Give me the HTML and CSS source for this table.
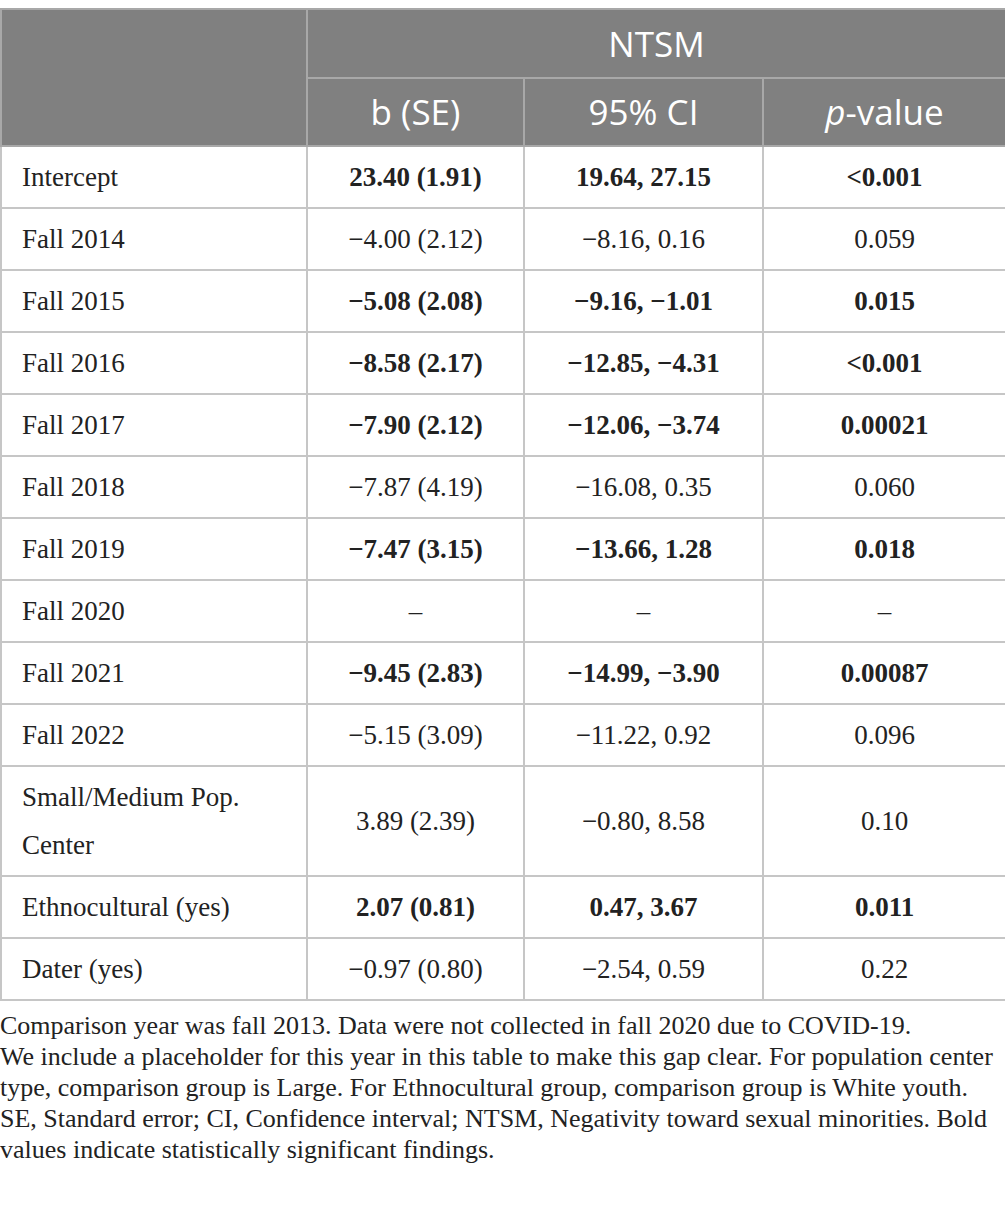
FILE: index.html
```html
<!DOCTYPE html>
<html>

<head lang="en">
	<meta charset="UTF-8">
	<title>NTSM table</title>
	<link rel="stylesheet" href="styles.css">
</head>

<body>
	<table class="data-table">
		<colgroup>
			<col class="col-label">
			<col class="col-b">
			<col class="col-ci">
			<col class="col-p">
		</colgroup>
		<thead>
			<tr class="head-top">
				<th rowspan="2"></th>
				<th colspan="3">NTSM</th>
			</tr>
			<tr class="head-sub">
				<th>b (SE)</th>
				<th>95% CI</th>
				<th><i>p</i>-value</th>
			</tr>
		</thead>
		<tbody>
			<tr class="sig">
				<td>Intercept</td>
				<td>23.40 (1.91)</td>
				<td>19.64, 27.15</td>
				<td>&lt;0.001</td>
			</tr>
			<tr>
				<td>Fall 2014</td>
				<td>−4.00 (2.12)</td>
				<td>−8.16, 0.16</td>
				<td>0.059</td>
			</tr>
			<tr class="sig">
				<td>Fall 2015</td>
				<td>−5.08 (2.08)</td>
				<td>−9.16, −1.01</td>
				<td>0.015</td>
			</tr>
			<tr class="sig">
				<td>Fall 2016</td>
				<td>−8.58 (2.17)</td>
				<td>−12.85, −4.31</td>
				<td>&lt;0.001</td>
			</tr>
			<tr class="sig">
				<td>Fall 2017</td>
				<td>−7.90 (2.12)</td>
				<td>−12.06, −3.74</td>
				<td>0.00021</td>
			</tr>
			<tr>
				<td>Fall 2018</td>
				<td>−7.87 (4.19)</td>
				<td>−16.08, 0.35</td>
				<td>0.060</td>
			</tr>
			<tr class="sig">
				<td>Fall 2019</td>
				<td>−7.47 (3.15)</td>
				<td>−13.66, 1.28</td>
				<td>0.018</td>
			</tr>
			<tr>
				<td>Fall 2020</td>
				<td>–</td>
				<td>–</td>
				<td>–</td>
			</tr>
			<tr class="sig">
				<td>Fall 2021</td>
				<td>−9.45 (2.83)</td>
				<td>−14.99, −3.90</td>
				<td>0.00087</td>
			</tr>
			<tr>
				<td>Fall 2022</td>
				<td>−5.15 (3.09)</td>
				<td>−11.22, 0.92</td>
				<td>0.096</td>
			</tr>
			<tr>
				<td>Small/Medium Pop.<br>Center</td>
				<td>3.89 (2.39)</td>
				<td>−0.80, 8.58</td>
				<td>0.10</td>
			</tr>
			<tr class="sig">
				<td>Ethnocultural (yes)</td>
				<td>2.07 (0.81)</td>
				<td>0.47, 3.67</td>
				<td>0.011</td>
			</tr>
			<tr>
				<td>Dater (yes)</td>
				<td>−0.97 (0.80)</td>
				<td>−2.54, 0.59</td>
				<td>0.22</td>
			</tr>
		</tbody>
	</table>
	<p class="note">Comparison year was fall 2013. Data were not collected in fall 2020 due to COVID-19.<br>
		We include a placeholder for this year in this table to make this gap clear. For population center<br>
		type, comparison group is Large. For Ethnocultural group, comparison group is White youth.<br>
		SE, Standard error; CI, Confidence interval; NTSM, Negativity toward sexual minorities. Bold<br>
		values indicate statistically significant findings.</p>
</body>

</html>
```

FILE: styles.css
```css
* {
	margin: 0;
	padding: 0;
}

body {
	background: #fff;
	color: #222;
	font-family: "Liberation Serif", serif;
	padding-top: 8px;
}

.data-table {
	width: 1005px;
	border-collapse: collapse;
	table-layout: fixed;
}

.col-label {
	width: 306px;
}

.col-b {
	width: 217px;
}

.col-ci {
	width: 239px;
}

.col-p {
	width: 243px;
}

.data-table th {
	background: #808080;
	color: #fff;
	font-family: "Open Sans", sans-serif;
	font-weight: normal;
	font-size: 35px;
	line-height: 40px;
	border: 2px solid #a8a8a8;
	text-align: center;
	vertical-align: middle;
}

.head-top th {
	height: 67px;
}

.head-sub th {
	height: 66px;
}

.data-table td {
	border: 2px solid #c6c6c6;
	font-size: 27px;
	line-height: 48px;
	padding: 6px 0;
	text-align: center;
}

.data-table td:first-child {
	text-align: left;
	padding-left: 20px;
}

.sig td {
	font-weight: bold;
}

.sig td:first-child {
	font-weight: normal;
}

.note {
	font-size: 26px;
	line-height: 31px;
	padding-top: 9px;
	white-space: nowrap;
	color: #222;
}
```
